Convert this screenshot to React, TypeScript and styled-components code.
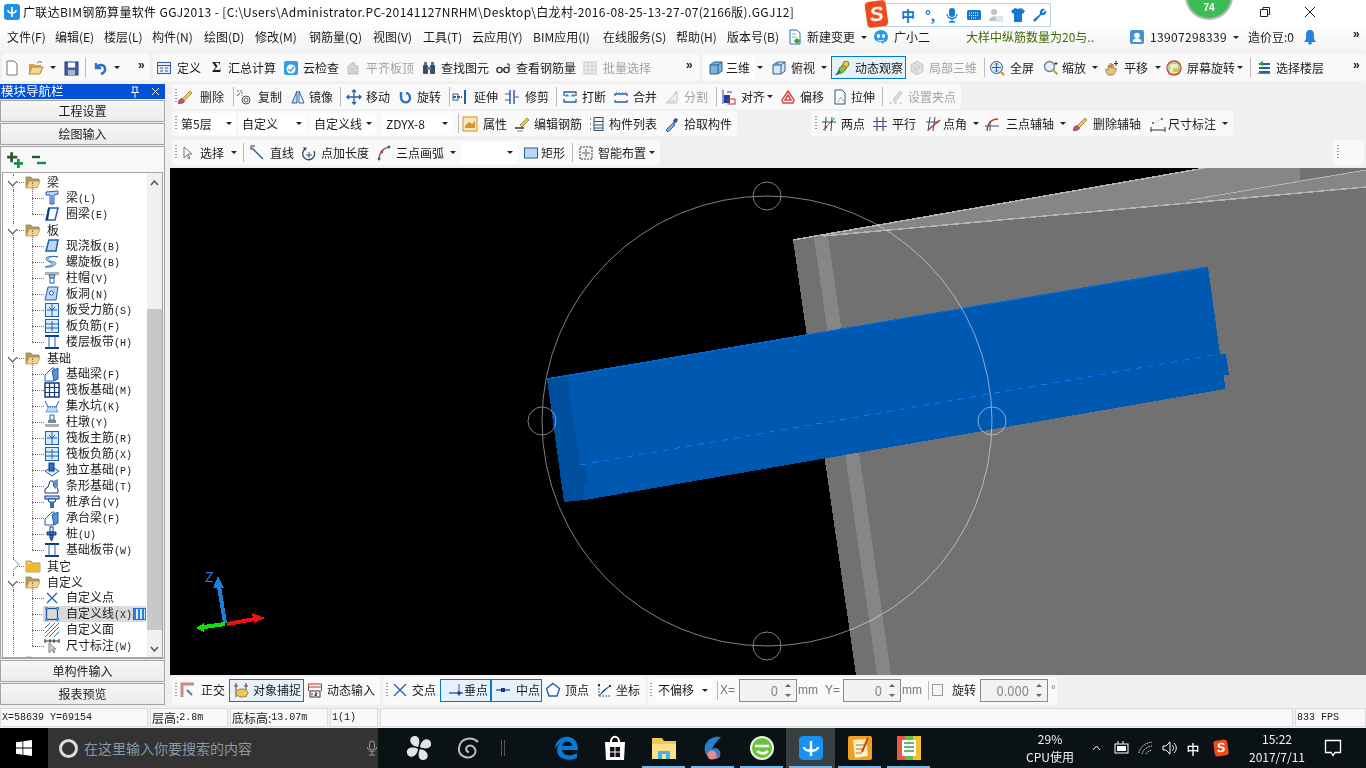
import React from 'react';
import styled, { createGlobalStyle } from 'styled-components';

const Global = createGlobalStyle`
  html, body { margin: 0; padding: 0; background: #f0f0f0; overflow: hidden; }
  * { box-sizing: border-box; }
  body { font-family: "Noto Sans CJK SC", "Liberation Sans", sans-serif; font-size: 12px; color: #1a1a1a; line-height: 1; }
`;

/* ---------- icons ---------- */
const B = '#1c5fb8', L = '#bcd6f5';
const icons: Record<string, React.ReactNode> = {
  new: <path d="M3 1h7l3 3v11H3z" fill="#fff" stroke="#777" />,
  open: <><path d="M1 4h5l1 1h6v2H5l-3 7H1z" fill="#d9a443" /><path d="M4 7h11l-3 7H1z" fill="#f5d98a" stroke="#b08a30" /><path d="M9 3l3-2 2 2" fill="none" stroke="#3a7ac0" /></>,
  save: <><rect x="2" y="2" width="13" height="13" fill="#3f5fb0" stroke="#24397a" /><rect x="5" y="2.5" width="7" height="5" fill="#fff" /><rect x="5" y="10" width="7" height="5" fill="#aab4c8" /></>,
  undo: <path d="M4 3v5h5M4 8c2-4 8-4 9 0 .6 3-1 5-4 6" fill="none" stroke="#2a72c8" strokeWidth="2.4" />,
  define: <><rect x="1.5" y="2.5" width="13" height="11" fill="#e4eef9" stroke="#2c5f9e" /><path d="M1.5 5.5h13M4 8h3M4 11h3M9 8h3M9 11h3" stroke="#2c5f9e" /></>,
  cloud: <><rect x="1" y="1" width="14" height="14" rx="2" fill="#2f9fe8" /><circle cx="8" cy="9" r="4.5" fill="#fff" /><path d="M5.5 9l2 2 3.5-4" stroke="#2f9fe8" strokeWidth="1.4" fill="none" /></>,
  align: <><path d="M3 14V6l6-4v3l4 1v8z" fill="#d8d8d8" stroke="#bdbdbd" /><path d="M5 9h6M5 12h6" stroke="#bbb" /></>,
  binoc: <><rect x="2" y="5" width="5" height="9" rx="1" fill="#33506e" /><rect x="9" y="5" width="5" height="9" rx="1" fill="#33506e" /><rect x="6" y="7" width="4" height="3" fill="#6a819b" /><rect x="3" y="2" width="3" height="3" fill="#5a7592" /><rect x="10" y="2" width="3" height="3" fill="#5a7592" /></>,
  glasses: <><circle cx="4.5" cy="10" r="2.6" fill="none" stroke="#333" strokeWidth="1.4" /><circle cx="11.5" cy="10" r="2.6" fill="none" stroke="#333" strokeWidth="1.4" /><path d="M7 9.5h2M14 9V4h-2" stroke="#333" fill="none" /></>,
  batch: <><rect x="2" y="2" width="12" height="12" fill="#eee" stroke="#c8c8c8" /><path d="M2 6h12M2 10h12M6 2v12M10 2v12" stroke="#cfcfcf" /></>,
  cube: <><path d="M2 5l4-3h8v9l-4 3H2z" fill="#7fb4de" stroke="#2d5f8f" /><path d="M2 5h8v9M10 5l4-3" fill="none" stroke="#2d5f8f" /></>,
  cubeTop: <><path d="M2 5l4-3h8v9l-4 3H2z" fill="#d6e7f5" stroke="#2d5f8f" /><path d="M2 5h8v9M10 5l4-3" fill="none" stroke="#2d5f8f" /><path d="M6 2l4 3H2z" fill="#5a93c5" /></>,
  orbit: <><path d="M3 14c0-6 4-10 10-11-1 6-4 10-10 11z" fill="#86c440" stroke="#3c7a1d" /><circle cx="11" cy="4" r="3" fill="#e8c84a" stroke="#9a7a1d" /><path d="M1 15l4-4" stroke="#2050a0" strokeWidth="1.4" /></>,
  local3d: <><path d="M8 1l6 4v6l-6 4-6-4V5z" fill="#e2e2e2" stroke="#c4c4c4" /><path d="M2 5l6 4 6-4M8 9v6M5 3l6 4M5 13V7" stroke="#c8c8c8" fill="none" /></>,
  full: <><circle cx="7.5" cy="7.5" r="6" fill="#dbe8f6" stroke="#2d5f9e" /><path d="M7.5 3v9M3 7.5h9M6 4.5l1.5-1.5L9 4.5M6 10.5L7.5 12 9 10.5" stroke="#2d5f9e" fill="none" /><path d="M12 12l3 3" stroke="#d68a20" strokeWidth="2" /></>,
  zoom: <><circle cx="6.5" cy="6.5" r="5" fill="#e8eef6" stroke="#6a7f99" strokeWidth="1.3" /><path d="M10.5 10.5l4 4" stroke="#c8a23a" strokeWidth="2.2" /><path d="M13 2v3M11.5 3.5h3" stroke="#333" /></>,
  pan: <><path d="M4 15c-2-3-3-5-2-6l2 1V6l1-1 1 3V4l1-1 1 5V5l1-1 1 5 2-1c1 2-1 5-3 7z" fill="#e6c37a" stroke="#8a6a30" strokeWidth=".7" /><path d="M12 1v5M10 3.5h4" stroke="#333" /></>,
  rotate: <><rect x="3" y="3" width="10" height="11" fill="#dff0c8" stroke="#7aa45a" /><path d="M8 1c4 0 7 3 7 7s-3 7-7 7-7-3-7-7 3-7 7-7z" fill="none" stroke="#d84a30" strokeWidth="1.4" /><rect x="7" y="8" width="5" height="4" fill="#f0c040" /></>,
  floors: <><path d="M3 4h11M3 8h11M3 12h11" stroke="#2c5f9e" strokeWidth="2" /><path d="M7 1L2 4l5 2" fill="#38a048" /><path d="M5 12l-3 1.5h12" stroke="#38a048" fill="none" /></>,
  brush: <><path d="M5 10l8-8 2 2-8 8z" fill="#e8c860" stroke="#8a6a20" strokeWidth=".7" /><path d="M1 15c0-4 1-5 4-6l3 3c-1 3-4 3-7 3z" fill="#c04a60" /><path d="M3 13c1-1 2-1 3-1" stroke="#6a9ad8" /></>,
  copy: <><circle cx="11" cy="11" r="4" fill="none" stroke="#555" /><circle cx="11" cy="11" r="2" fill="none" stroke="#555" /><path d="M2 2h5v5" fill="none" stroke="#2a72c8" strokeDasharray="2 1" /><path d="M2 7l3-3" stroke="#555" /></>,
  mirror: <><path d="M7 2v12H2z" fill="#c8dcf0" stroke="#2d5f9e" /><path d="M9 2v12h5z" fill="#fff" stroke="#2d5f9e" /></>,
  move: <path d="M8 1v14M1 8h14M6 3l2-2 2 2M6 13l2 2 2-2M3 6L1 8l2 2M13 6l2 2-2 2" fill="none" stroke="#2d5f9e" strokeWidth="1.3" />,
  rot: <path d="M4 3v5c0 7 9 7 9 1 0-3-2-5-4-5" fill="none" stroke="#2a72c8" strokeWidth="2.4" />,
  extend: <><rect x="12" y="1" width="2" height="14" fill="#2d5f9e" /><path d="M1 8h9" stroke="#2d5f9e" strokeWidth="2" strokeDasharray="3 1" /><rect x="1" y="5" width="5" height="6" fill="none" stroke="#2d5f9e" /></>,
  trim: <><path d="M6 1v14M10 1v14" stroke="#2d5f9e" strokeWidth="1.5" /><path d="M1 5h5M1 11h5M11 8h4" stroke="#555" /></>,
  break: <><path d="M2 7V3h12v4M2 10v3h12v-3" fill="none" stroke="#2d5f9e" strokeWidth="1.3" /><path d="M5 5l-2 2h4M11 5l2 2H9" fill="#38a0c0" stroke="#38a0c0" /></>,
  merge: <><path d="M2 7V5h12v2M2 11v2h12v-2" fill="none" stroke="#2d5f9e" strokeWidth="1.3" /><path d="M3 3l2 2 2-2M9 3l2 2 2-2" fill="none" stroke="#38a0c0" /></>,
  split: <path d="M2 14L13 3v11zM5 12h6M10 5l3-3" fill="#efefef" stroke="#c4c4c4" />,
  align2: <><rect x="3" y="6" width="6" height="8" fill="#2040a0" /><rect x="7" y="10" width="7" height="5" fill="none" stroke="#c03030" /><path d="M2 1v14M6 3h5" stroke="#2040a0" /></>,
  offset: <path d="M8 2l6 9-1 3H3l-1-3zM8 6l3 5H5z" fill="#fff" stroke="#d04a40" strokeWidth="1.5" />,
  stretch: <><path d="M3 1h7l3 3v11H3z" fill="#fff" stroke="#33506e" /><path d="M6 13l3-5 3 5" fill="none" stroke="#33506e" strokeDasharray="1 1" /></>,
  doc: <><path d="M3 1h7l3 3v11H3z" fill="#fff" stroke="#2d6fc0" /><path d="M5 5h4M5 8h5" stroke="#7ab0e0" /><path d="M10 9l3.500 3-3.500 3-3.500-3z" fill="#4aa02a" /></>,
  mascot: <><path d="M8 1c4 0 7 3 7 7 0 3-2 5-4 5l-1 2-2-2c-4 0-7-2-7-5 0-4 3-7 7-7z" fill="#2a9ae8" /><ellipse cx="5.500" cy="7" rx="1.600" ry="2" fill="#fff" /><ellipse cx="10.500" cy="7" rx="1.600" ry="2" fill="#fff" /><path d="M5 11c2 1 4 1 6 0" stroke="#fff" fill="none" /></>,
  user: <><rect x="1" y="1" width="14" height="14" rx="2" fill="#4a90d0" /><circle cx="8" cy="6.500" r="2.800" fill="#fff" /><path d="M3.500 13c0-5 9-5 9 0z" fill="#fff" /></>,
  bell: <><path d="M8 1c3 0 4 2 4 5v4l2 3H2l2-3V6c0-3 1-5 4-5z" fill="#2a80e0" /><circle cx="8" cy="14" r="1.800" fill="#2a80e0" /></>,
  gripPt: <><path d="M5 11L12 2l2 2-7 9z" fill="#ddd" stroke="#c4c4c4" /><path d="M1 14h3M6 14h3M11 14h3" stroke="#bbb" /></>,
  prop: <><rect x="1" y="1" width="14" height="14" fill="#fbe6b8" stroke="#d89030" /><path d="M3 10l4-4 3 2 3-3v7H3z" fill="#d89030" /></>,
  edit: <><path d="M6 9l7-7 2 2-7 7z" fill="#e8c860" stroke="#8a6a20" strokeWidth=".7" /><path d="M1 12h9" stroke="#333" strokeWidth="1.5" /><path d="M3 15h6" stroke="#888" /></>,
  list: <><path d="M1 3h2M1 8h2M1 13h2" stroke="#333" strokeDasharray="1 1" /><rect x="5" y="1.5" width="9" height="13" fill="#f5f8fc" stroke="#33506e" /><path d="M5 5.5h9M5 9h9M5 12h9" stroke="#33506e" /></>,
  pick: <><path d="M2 14l7-7 2 2-7 7z" fill="#7ab4e4" stroke="#2d5f9e" /><path d="M9 5l2-3 3 1-1 3-3 2z" fill="#2d5f9e" /></>,
  two: <><path d="M2 14L14 2" stroke="#3a8a30" /><path d="M1 6h14M5 1l-1 14M11 1l-1 14" stroke="#33506e" /><circle cx="5" cy="11" r="1.3" fill="#c03030" /></>,
  par: <path d="M1 5.5h14M1 10.5h14M5 1v14M11 1v14" stroke="#4a4a90" strokeWidth="1.2" />,
  ang: <><path d="M1 6h13M5 1L3 15M10 1L8 15" stroke="#33506e" /><path d="M3 14L15 4" stroke="#c03030" strokeWidth="1.5" /></>,
  arc3: <><path d="M3 15C3 8 7 3 14 3" fill="none" stroke="#c03030" strokeWidth="1.3" /><path d="M1 10h14M6 5v10" stroke="#33506e" /></>,
  dim: <><path d="M1 14h14M1 11v5M15 11v5" stroke="#333" /><rect x="2" y="6" width="2" height="2" fill="#4aa03a" /><rect x="11" y="2" width="2" height="2" fill="#4aa03a" /><path d="M5 7l6-4" stroke="#aaa" strokeDasharray="1 1" /></>,
  cursor: <path d="M5 2v11l3-3 2 4 1-1-2-4h4z" fill="#fff" stroke="#777" />,
  line: <><path d="M2 3l11 11" stroke="#2d5f9e" strokeWidth="1.5" /><path d="M1 1v4M1 1h4" stroke="#333" /></>,
  ptlen: <><path d="M4 4a6 6 0 1 0 9 2" fill="none" stroke="#33506e" strokeWidth="1.4" /><path d="M8 7v6M5 10h6" stroke="#33506e" /><path d="M2 2l4 1-2 3z" fill="#33506e" /></>,
  arc: <><path d="M3 14C3 8 7 3 13 2" fill="none" stroke="#c05a30" strokeWidth="1.6" /><circle cx="3" cy="14" r="1.4" fill="#2d5f9e" /><circle cx="13" cy="2" r="1.4" fill="#2d5f9e" /><circle cx="6" cy="7" r="1.2" fill="#2d5f9e" /></>,
  rect: <rect x="1.5" y="3" width="13" height="10" fill="#bcd6f5" stroke="#2d5f9e" />,
  smart: <><rect x="2" y="2" width="12" height="12" fill="#f6f6f6" stroke="#333" strokeDasharray="2 1" /><path d="M8 4v8M4 8h8" stroke="#2d5f9e" /><circle cx="8" cy="8" r="1.5" fill="#d8a020" /></>,
  ortho: <><path d="M3 15V2h12" fill="none" stroke="#c88a8a" strokeWidth="3" /><path d="M8 8l5 5" stroke="#5a7a9a" strokeWidth="2" /></>,
  snap: <><path d="M3 1v14M13 1v14" stroke="#8a3020" /><path d="M1 4h4M11 4h4" stroke="#8a3020" /><ellipse cx="9" cy="11" rx="6" ry="4" fill="#e8c860" stroke="#a08030" /></>,
  dyn: <><path d="M1.5 2h13M1.5 2v7M14.5 2v7M1.5 5h13" stroke="#a04030" fill="none" /><rect x="3" y="9" width="10" height="6" fill="#fff" stroke="#333" /><path d="M5 11v2.5M8 11h2v1H8v1.5h2" stroke="#333" fill="none" /></>,
  cross: <path d="M2 2l12 12M14 2L2 14" stroke="#2a5fa8" strokeWidth="1.4" />,
  perp: <><path d="M1 11h14" stroke="#2a5fa8" strokeWidth="1.4" /><path d="M11 2v12" stroke="#2a5fa8" /><rect x="9.5" y="9.5" width="3" height="3" fill="#1a3a80" /></>,
  mid: <><path d="M1 8h14" stroke="#2a5fa8" strokeWidth="1.4" /><rect x="6" y="6" width="4" height="4" fill="#1a3a80" /></>,
  vert: <path d="M8 1.5l6.5 5-2.5 7.5H4L1.5 6.5z" fill="#fff" stroke="#2a5fa8" strokeWidth="1.4" />,
  coord: <><path d="M3 14h11M3 14V3" stroke="#2a5fa8" strokeDasharray="2 1" /><path d="M3 14l5-6 6-4" stroke="#2a5fa8" /><rect x="2" y="2" width="2" height="2" fill="#333" /><rect x="13" y="3" width="2" height="2" fill="#333" /></>,
  plus: <><path d="M5 1v9M1 5.5h9" stroke="#2a5a2a" strokeWidth="2.4" /><path d="M11 7v8M7 11h8" stroke="#1a8a50" strokeWidth="2.4" /></>,
  minus: <><path d="M1 5h8" stroke="#2a5a2a" strokeWidth="2.4" /><path d="M6 11h9" stroke="#1a8a50" strokeWidth="2.4" /></>,
  fOpen: <><path d="M1 3h5l1 2h7v3H4l-3 6z" fill="#b89a60" stroke="#7a6a40" strokeWidth=".6" /><path d="M4 7h11l-3 7H1z" fill="#f2d488" stroke="#a08a50" strokeWidth=".7" /></>,
  fClosed: <><path d="M1 3h5l1 2h8v9H1z" fill="#f5d060" stroke="#8a7030" strokeWidth=".7" /><path d="M1 6h14v8H1z" fill="#f0b830" /></>,
  beam: <><path d="M2 2l12-1v3l-4 1v9H6V5H2z" fill={L} stroke={B} /><path d="M8 5v9" stroke={B} /></>,
  ring: <><path d="M5 2h9l-3 12H2z" fill="#fff" stroke={B} strokeWidth="1.5" /><path d="M3 14l2-12" stroke="#103a80" strokeWidth="2" /></>,
  slab: <path d="M5 2h9l-2 11H2z" fill={L} stroke={B} strokeWidth="1.5" />,
  spiral: <path d="M14 3C6 1 1 5 6 7c5 1 9 2 3 5-3 2-6 1-8 1 4-2 8-1 7-4C4 8-1 4 4 3c3-1 7-1 10 0z" fill={L} stroke={B} strokeWidth=".8" />,
  cap: <><rect x="1" y="2" width="14" height="3" fill="#b0b0b0" /><path d="M5 5h6l-1 3H6z" fill={L} stroke={B} /><rect x="6" y="8" width="4" height="5" fill="#fff" stroke={B} /></>,
  hole: <><path d="M4 1h10l-2 13H1z" fill={L} stroke={B} /><circle cx="7.5" cy="7" r="2" fill="#fff" stroke={B} /></>,
  gridA: <><rect x="1.5" y="1.5" width="13" height="13" fill="#dcebfb" stroke={B} /><path d="M8 2v12M3 8h10M5 5l3 3 3-3" stroke={B} fill="none" /></>,
  gridB: <><rect x="1.5" y="1.5" width="13" height="13" fill="#dcebfb" stroke={B} /><path d="M2 6h12M2 10h12M8 3v10" stroke={B} /></>,
  band: <><path d="M1 2h14M1 14h14" stroke="#103a80" strokeWidth="2" /><path d="M5 2v12M11 2v12" stroke={B} /></>,
  fbeam: <><path d="M1 15V9l7-7h2v13z" fill="#fff" stroke={B} /><path d="M8 5l6-3v11l-4 2z" fill="#5a93d0" stroke={B} /></>,
  raft: <><rect x="1" y="1" width="14" height="14" fill="#fff" stroke="#103a80" strokeWidth="1.5" /><path d="M1 5.5h14M1 10.5h14M5.5 1v14M10.5 1v14" stroke="#103a80" strokeWidth="1.2" /></>,
  pit: <><path d="M1 3l3 6h8l3-6" fill="none" stroke={B} /><path d="M4 9h8l2 5H2z" fill={L} strokeDasharray="1 1" stroke={B} /></>,
  pier: <><path d="M6 1h4v5H6z" fill="#fff" stroke={B} /><path d="M4 6h8v3H4z" fill="#789" /><rect x="1" y="10" width="14" height="3" fill="#b0b0b0" /></>,
  indep: <><path d="M1 9l7-4 7 4-7 5z" fill="#dcebfb" stroke={B} /><rect x="5" y="1" width="5" height="8" fill="#2d6fc0" stroke="#103a80" /></>,
  strip: <><path d="M1 15v-4l3-2 2-6h3l1 6h2l2 2v4z" fill="#fff" stroke="#103a80" /><path d="M9 3l5-2v8l-3 2z" fill="#5a93d0" /></>,
  pile: <><rect x="1" y="2" width="14" height="3" fill={L} stroke="#103a80" /><path d="M4 5h8l-1 3H5z" fill="#fff" stroke="#103a80" /><rect x="6" y="8" width="4" height="6" fill="#2d6fc0" /></>,
  pileU: <><rect x="6" y="1" width="3" height="5" fill="#fff" stroke="#103a80" /><path d="M3 6h9v3H3zM6 9h3v3l-1.500 3-1.500-3z" fill="#2d6fc0" stroke="#103a80" /></>,
  xPt: <path d="M3 3l10 10M13 3L3 13" stroke="#2a5fa8" strokeWidth="1.3" />,
  xLine: <><rect x="2.500" y="2.500" width="11" height="11" fill="none" stroke="#1c4f98" strokeWidth="1.2" /><path d="M1 1h3v3H1zM12 1h3v3h-3zM1 12h3v3H1zM12 12h3v3h-3z" fill="#4a8fe0" /></>,
  xFace: <path d="M1 6l5-5M1 11L11 1M1 15L15 1M5 15L15 5M10 15l5-5" stroke="#2a6fc8" />,
  xDim: <><path d="M1 3h14M1 1v4M15 1v4M6 1v4M10 1v4" stroke="#222" /><path d="M5 5v10l3-3 2 3 1-1-2-3h3z" fill="#ccc" stroke="#888" /></>,
};

const Svg = styled.svg<{ $s: number }>`
  width: ${p => p.$s}px;
  height: ${p => p.$s}px;
  flex: none;
  display: block;
`;
const Icon = ({ n, s = 16 }: { n: string; s?: number }) => (
  <Svg $s={s} viewBox="0 0 16 16">{icons[n]}</Svg>
);

/* ---------- toolbar machinery ---------- */
type It = { left: number; node: React.ReactNode };

const Slot = styled.div<{ $w: number }>`
  width: ${p => p.$w}px;
  flex: none;
  height: 100%;
  display: flex;
  align-items: center;
`;
const ToolBox = styled.div<{ $pad: number; $w?: number; $on?: boolean; $white?: boolean }>`
  display: flex;
  align-items: center;
  padding-left: ${p => p.$pad}px;
  ${p => (p.$w ? `width: ${p.$w}px;` : '')}
  ${p => (p.$on ? 'height: 23px; border: 1px solid #0078d7; background: #e5f1fb;' : '')}
  ${p => (p.$white ? 'height: 24px; background: #fff;' : '')}
`;
const Label = styled.span<{ $off?: boolean; $gap?: number }>`
  white-space: nowrap;
  font-size: 12px;
  margin-left: ${p => p.$gap ?? 0}px;
  color: ${p => (p.$off ? '#a3a3a3' : '#1a1a1a')};
`;
const Phone = styled.span`
  white-space: nowrap;
  font-size: 12px;
  letter-spacing: 0.35px;
`;
const Sigma = styled.span`
  font: bold 14px "Liberation Serif", serif;
`;
const Separator = styled.div`
  width: 1px;
  height: 19px;
  background: #b9b9b9;
`;
const Grip = styled.div`
  width: 2px;
  height: 15px;
  background-image: linear-gradient(#9a9a9a 50%, transparent 50%);
  background-size: 2px 3px;
`;
const Caret = styled.div`
  width: 0;
  height: 0;
  margin-left: 2px;
  border-left: 3px solid transparent;
  border-right: 3px solid transparent;
  border-top: 3px solid #222;
`;
const More = styled.span`
  font-family: "Liberation Sans", sans-serif;
  font-size: 12px;
  font-weight: bold;
  margin-top: -6px;
`;
const Combo = styled.div<{ $w: number }>`
  width: ${p => p.$w}px;
  height: 22px;
  background: #fff;
  display: flex;
  align-items: center;
  justify-content: space-between;
  padding: 0 4px 0 3px;
`;

type TOpt = { t?: number; off?: boolean; box?: [number, number]; white?: [number, number] };
const T = (c: number, icon: string, label: string, o: TOpt = {}): It => {
  const span = o.box ?? o.white;
  const left = span ? span[0] : c - 8;
  const gap = (o.t ?? c + 12) - (c + 8);
  return {
    left,
    node: (
      <ToolBox $pad={c - 8 - left} $w={span ? span[1] - span[0] : undefined} $on={!!o.box} $white={!!o.white}>
        <Icon n={icon} />
        <Label $gap={gap} $off={o.off}>{label}</Label>
      </ToolBox>
    ),
  };
};
const I = (c: number, icon: string): It => ({ left: c - 8, node: <Icon n={icon} /> });
const S = (x: number): It => ({ left: x, node: <Separator /> });
const Gr = (x: number): It => ({ left: x, node: <Grip /> });
const C = (x: number): It => ({ left: x - 5, node: <Caret /> });
const N = (x: number, node: React.ReactNode): It => ({ left: x, node });
const X = (x: number): It => ({ left: x - 5, node: <More>»</More> });
const Cb = (x: number, w: number, text: string): It => ({
  left: x,
  node: <Combo $w={w}><Label>{text}</Label><Caret /></Combo>,
});

const BandBox = styled.div<{ $w: number; $ml: number; $plain?: boolean; $pb?: number }>`
  width: ${p => p.$w}px;
  margin-left: ${p => p.$ml}px;
  flex: none;
  height: 100%;
  display: flex;
  border-radius: 3px;
  padding-bottom: ${p => p.$pb ?? 0}px;
  background: ${p => (p.$plain ? 'transparent' : '#f9f9f9')};
`;
type BandDef = { from: number; to: number; items: It[]; plain?: boolean; pb?: number };
const Bands = ({ base, bands }: { base: number; bands: BandDef[] }) => {
  let prev = base;
  return (
    <>
      {bands.map((b, bi) => {
        const ml = b.from - prev;
        prev = b.to;
        return (
          <BandBox key={bi} $w={b.to - b.from} $ml={ml} $plain={b.plain} $pb={b.pb}>
            <Slot $w={b.items[0].left - b.from} />
            {b.items.map((it, i) => {
              const next = i + 1 < b.items.length ? b.items[i + 1].left : b.to;
              return <Slot key={i} $w={next - it.left}>{it.node}</Slot>;
            })}
          </BandBox>
        );
      })}
    </>
  );
};

/* ---------- frame ---------- */
const Page = styled.div`
  width: 1366px;
  height: 768px;
  display: flex;
  flex-direction: column;
  overflow: hidden;
  background: #f0f0f0;
`;
const TitleBar = styled.div`
  height: 23px;
  flex: none;
  background: #fff;
  display: flex;
  align-items: center;
  position: relative;
  padding-left: 4px;
`;
const AppLogo = styled.div`
  width: 16px;
  height: 16px;
  border-radius: 3px;
  background: #1e90e8;
  display: flex;
  align-items: center;
  justify-content: center;
  margin-right: 3px;
`;
const TitleText = styled.span`
  font-size: 12px;
  letter-spacing: 0.36px;
  white-space: nowrap;
  color: #111;
`;
const WinControls = styled.div`
  position: absolute;
  right: 3px;
  top: 0;
  height: 23px;
  display: flex;
  align-items: center;
  gap: 29px;
`;
const WinBtn = styled.svg`
  width: 16px;
  height: 16px;
  display: block;
`;
const WinWrap = styled.div`
  width: 16px;
`;
const Ime = styled.div`
  position: absolute;
  left: 875px;
  top: 3px;
  width: 176px;
  height: 24px;
  background: #fff;
  border: 1px solid #bcd3e6;
  display: flex;
  align-items: center;
  padding-left: 24px;
  gap: 6px;
  z-index: 3;
`;
const ImeLogo = styled.div`
  position: absolute;
  left: 866px;
  top: 1px;
  width: 21px;
  height: 26px;
  background: #ee4a1a;
  border-radius: 4px;
  transform: rotate(-8deg);
  color: #fff;
  font: italic bold 21px "Liberation Sans", sans-serif;
  text-align: center;
  line-height: 26px;
  z-index: 4;
`;
const ImeChar = styled.span`
  color: #1478d0;
  font-weight: 700;
  font-size: 14px;
  width: 16px;
  text-align: center;
`;
const Ball = styled.div`
  position: absolute;
  left: 1185px;
  top: -28px;
  width: 48px;
  height: 48px;
  border-radius: 50%;
  background: #3fbb55;
  border: 2px solid #b9b9b9;
  display: flex;
  align-items: flex-end;
  justify-content: center;
  padding-bottom: 5px;
  color: #fff;
  font: bold 10px "Liberation Sans", sans-serif;
  z-index: 2;
`;

const MenuBar = styled.div`
  height: 31px;
  flex: none;
  display: flex;
  padding-bottom: 3px;
  background: linear-gradient(#ffffff, #f2f2f2);
`;
const TipText = styled.span`
  color: #3f6a00;
  font-size: 12px;
  white-space: nowrap;
`;
const Row = styled.div<{ $h: number; $mt?: number }>`
  height: ${p => p.$h}px;
  margin-top: ${p => p.$mt ?? 0}px;
  flex: none;
  display: flex;
`;
const Body = styled.div`
  flex: none;
  height: 624px;
  display: flex;
`;

/* ---------- nav panel ---------- */
const Nav = styled.div`
  width: 165px;
  flex: none;
  display: flex;
  flex-direction: column;
`;
const NavHead = styled.div`
  height: 15px;
  margin-bottom: 1px;
  flex: none;
  background: #0550d8;
  color: #fff;
  font-size: 12.5px;
  display: flex;
  align-items: center;
  padding: 0 1px;
`;
const NavHeadText = styled.span`
  flex: 1;
`;
const NavPin = styled.svg`
  width: 10px;
  height: 12px;
  display: block;
  margin-right: 11px;
`;
const NavClose = styled.svg`
  width: 9px;
  height: 9px;
  display: block;
  margin-right: 4px;
`;
const NavTab = styled.div`
  height: 22px;
  flex: none;
  margin-bottom: 1px;
  border: 1px solid #a4a4a4;
  background: linear-gradient(#f6f6f6, #ececec);
  display: flex;
  align-items: center;
  justify-content: center;
  font-size: 12px;
`;
const TreeShell = styled.div`
  height: 513px;
  flex: none;
  margin-bottom: 1px;
  border: 1px solid #a4a4a4;
  background: #f4f4f4;
  display: flex;
  flex-direction: column;
  padding: 0 1px;
`;
const ExpandBar = styled.div`
  height: 25px;
  flex: none;
  display: flex;
  align-items: center;
  gap: 7px;
  padding-left: 4px;
  background: #f8f8f8;
`;
const TreeFrame = styled.div`
  height: 486px;
  flex: none;
  border: 1px solid #a4a4a4;
  background: #fff;
  display: flex;
  overflow: hidden;
`;
const TreeList = styled.div`
  width: 143px;
  flex: none;
  padding-top: 1px;
  overflow: hidden;
`;
const TreeRow = styled.div<{ $child?: boolean; $line?: boolean }>`
  position: relative;
  height: 16px;
  display: flex;
  align-items: center;
  padding-left: ${p => (p.$child ? '41px' : '22px')};
  white-space: nowrap;
  &::before {
    content: '';
    position: absolute;
    left: ${p => (p.$child ? '29px' : '11px')};
    top: 8px;
    width: ${p => (p.$child ? '12px' : '10px')};
    border-top: 1px dotted #777;
  }
  &::after {
    content: '';
    position: absolute;
    left: 29px;
    top: -8px;
    height: 16px;
    border-left: ${p => (p.$line ? '1px dotted #777' : 'none')};
  }
`;
const RootRail = styled.div`
  position: absolute;
  left: 10px;
  top: 0;
  height: 16px;
  border-left: 1px dotted #777;
`;
const Arrow = styled.div<{ $open?: boolean }>`
  position: absolute;
  left: ${p => (p.$open ? '6px' : '8px')};
  top: ${p => (p.$open ? '4px' : '3px')};
  width: 7px;
  height: 7px;
  background: #fff;
  border-right: 1.5px solid ${p => (p.$open ? '#444' : '#aaa')};
  border-bottom: 1.5px solid ${p => (p.$open ? '#444' : '#aaa')};
  transform: rotate(${p => (p.$open ? '45deg' : '-45deg')});
  z-index: 1;
`;
const TreeLabel = styled.span`
  margin-left: 6px;
  font-size: 12px;
  padding-right: 1px;
`;
const Key = styled.span`
  font-family: "Liberation Mono", monospace;
  font-size: 10px;
`;
const Chip = styled.span<{ $c: string }>`
  position: absolute;
  left: ${p => (p.$c === 'b' ? '94px' : '109px')};
  top: 3px;
  width: ${p => (p.$c === 'b' ? '14px' : '20px')};
  height: 13px;
  background: ${p => (p.$c === 'b' ? '#bcd6f5' : '#ffe14a')};
  border: 1px solid ${p => (p.$c === 'b' ? '#2a6fc8' : '#c8a820')};
`;
const SelChip = styled.span`
  position: absolute;
  left: 130px;
  top: 2px;
  width: 13px;
  height: 12px;
  background: repeating-linear-gradient(90deg, #2a7fd8 0 2px, #d8eaff 2px 4px);
  border: 1px solid #2a6fc8;
  z-index: 1;
`;
const SelBg = styled.div`
  position: absolute;
  left: 40px;
  right: 0;
  top: 0;
  bottom: 0;
  background: #d9d9d9;
  z-index: 0;
`;
const Above = styled.div`
  position: relative;
  display: flex;
  align-items: center;
  z-index: 1;
`;
const VScroll = styled.div`
  width: 16px;
  flex: none;
  background: #f0f0f0;
  display: flex;
  flex-direction: column;
  align-items: center;
  border-left: 1px solid #fff;
`;
const ScrollTrack = styled.div`
  height: 136px;
  flex: none;
  width: 100%;
  display: flex;
  justify-content: center;
  padding-top: 7px;
  color: #555;
`;
const ScrollTail = styled.div`
  height: 27px;
  flex: none;
  width: 100%;
  display: flex;
  justify-content: center;
  padding-top: 16px;
`;
const ScrollThumb = styled.div`
  height: 321px;
  flex: none;
  width: 100%;
  background: #c8c8c8;
`;
const Chev = styled.svg`
  width: 9px;
  height: 6px;
  display: block;
`;

type Child = [string, string, string, boolean?];
const tree: { name: string; open: boolean; kids: Child[] }[] = [
  { name: '梁', open: true, kids: [['梁', '(L)', 'beam'], ['圈梁', '(E)', 'ring']] },
  { name: '板', open: true, kids: [['现浇板', '(B)', 'slab'], ['螺旋板', '(B)', 'spiral'], ['柱帽', '(V)', 'cap'], ['板洞', '(N)', 'hole'], ['板受力筋', '(S)', 'gridA'], ['板负筋', '(F)', 'gridB'], ['楼层板带', '(H)', 'band']] },
  { name: '基础', open: true, kids: [['基础梁', '(F)', 'fbeam'], ['筏板基础', '(M)', 'raft'], ['集水坑', '(K)', 'pit'], ['柱墩', '(Y)', 'pier'], ['筏板主筋', '(R)', 'gridA'], ['筏板负筋', '(X)', 'gridB'], ['独立基础', '(P)', 'indep'], ['条形基础', '(T)', 'strip'], ['桩承台', '(V)', 'pile'], ['承台梁', '(F)', 'fbeam'], ['桩', '(U)', 'pileU'], ['基础板带', '(W)', 'band']] },
  { name: '其它', open: false, kids: [] },
  { name: '自定义', open: true, kids: [['自定义点', '', 'xPt'], ['自定义线', '(X)', 'xLine', true], ['自定义面', '', 'xFace'], ['尺寸标注', '(W)', 'xDim']] },
];

const Tree = () => (
  <TreeList>
    {tree.map((g, gi) => (
      <React.Fragment key={gi}>
        <TreeRow>
          <RootRail />
          <Arrow $open={g.open} />
          <Icon n={g.open ? 'fOpen' : 'fClosed'} />
          <TreeLabel>{g.name}</TreeLabel>
        </TreeRow>
        {g.kids.map((k, i) => (
          <TreeRow key={i} $child $line>
            <RootRail />
            {k[3] && <SelBg />}
            <Above>
              <Icon n={k[2]} />
              <TreeLabel>{k[0]}<Key>{k[1]}</Key></TreeLabel>
            </Above>
            {k[3] && <SelChip />}
          </TreeRow>
        ))}
      </React.Fragment>
    ))}
    <TreeRow>
      <Icon n="fOpen" />
      <Chip $c="b" />
      <Chip $c="y" />
    </TreeRow>
  </TreeList>
);

/* ---------- work area ---------- */
const Work = styled.div`
  width: 1196px;
  margin-left: 5px;
  flex: none;
  display: flex;
  flex-direction: column;
`;
const CanvasBox = styled.div`
  height: 507px;
  margin-top: 3px;
  flex: none;
  background: #000;
`;
const CanvasSvg = styled.svg`
  width: 1196px;
  height: 507px;
  display: block;
`;
const CanvasAxisText = styled.text`
  font: 14px "Liberation Sans", sans-serif;
  fill: #1a80e0;
`;
const OrbitRings = styled.g`
  fill: none;
  stroke: #808080;
  stroke-width: 1;
  mix-blend-mode: screen;
`;

const Canvas = () => (
  <CanvasBox>
    <CanvasSvg viewBox="170 168 1196 507" shapeRendering="crispEdges">
      <polygon points="793,240 1205,168 1366,168 1366,187 960,223 823,236" fill="#868686" />
      <polygon points="793,240 823,236 960,223 1366,187 1366,675 856,675" fill="#717171" />
      <polygon points="814,238 828,236 891,675 877,675" fill="#868686" />
      <polygon points="1300,168 1366,168 1366,170 1300,180" fill="#717171" />
      <line x1="793" y1="240" x2="1205" y2="168" stroke="#b4b4b4" strokeWidth="1.5" />
      <line x1="823" y1="236" x2="1366" y2="187" stroke="#b4b4b4" strokeWidth="1.5" />
      <line x1="1190" y1="200" x2="1366" y2="170" stroke="#b4b4b4" strokeWidth="1" />
      <polygon points="547,379 1208,267 1220,354 1226,354 1229,375 1224,375 1225,389 585,500 564,502" fill="#0059b0" />
      <polygon points="547,379 567,376 580,465 586,465 588,485 583,485 585,500 564,502" fill="#004f9e" />
      <line x1="547" y1="379" x2="1208" y2="267" stroke="#0068d4" strokeWidth="1.5" />
      <line x1="580" y1="465" x2="1220" y2="354" stroke="#0a78ee" strokeWidth="1" strokeDasharray="6 6" />
      <OrbitRings shapeRendering="geometricPrecision">
        <circle cx="767" cy="421" r="225" />
        <circle cx="767" cy="196" r="14" />
        <circle cx="542" cy="421" r="14" />
        <circle cx="992" cy="421" r="14" />
        <circle cx="767" cy="646" r="14" />
      </OrbitRings>
      <CanvasAxisText x="205" y="582">Z</CanvasAxisText>
      <path d="M225 623L218 580" stroke="#1a80e0" strokeWidth="4" />
      <polygon points="218,576 224,588 213,588" fill="#1a80e0" />
      <path d="M227 624L255 619" stroke="#f01010" strokeWidth="4" />
      <polygon points="265,618 252,613 254,623" fill="#f01010" />
      <path d="M225 624L204 627" stroke="#10e010" strokeWidth="4" />
      <polygon points="196,628 204,623 204,632" fill="#10e010" />
    </CanvasSvg>
  </CanvasBox>
);

const Spin = styled.div<{ $w: number }>`
  width: ${p => p.$w}px;
  height: 23px;
  border: 1px solid #8a8a8a;
  background: #f2f2f2;
  display: flex;
  align-items: center;
  justify-content: flex-end;
  color: #888;
  padding-right: 4px;
  font-size: 13px;
`;
const SpinArrows = styled.div`
  width: 8px;
  margin-left: 6px;
  display: flex;
  flex-direction: column;
  gap: 7px;
  align-items: center;
`;
const Tri = styled.div<{ $up?: boolean }>`
  width: 0;
  height: 0;
  border-left: 3px solid transparent;
  border-right: 3px solid transparent;
  ${p => (p.$up ? 'border-bottom: 3px solid #666;' : 'border-top: 3px solid #666;')}
`;
const Muted = styled.span`
  color: #777;
  font-size: 12px;
  white-space: nowrap;
  font-family: "Liberation Sans", sans-serif;
`;
const CheckBox = styled.div`
  width: 11px;
  height: 12px;
  border: 1px solid #9a9a9a;
  background: #f6f6f6;
`;
const SpinBox = ({ w, v }: { w: number; v: string }) => (
  <Spin $w={w}>{v}<SpinArrows><Tri $up /><Tri /></SpinArrows></Spin>
);

/* ---------- status + taskbar ---------- */
const Status = styled.div`
  height: 20px;
  flex: none;
  display: flex;
  gap: 2px;
  padding-bottom: 1px;
`;
const Cell = styled.div<{ $w: number; $grow?: boolean }>`
  ${p => (p.$grow ? 'flex: 1;' : `width: ${p.$w}px; flex: none;`)}
  border: 1px solid #dcdcdc;
  background: #f8f8f8;
  display: flex;
  align-items: center;
  padding-left: 1px;
  font-size: 12px;
  white-space: nowrap;
`;
const Mono = styled.span`
  font-family: "Liberation Mono", monospace;
  font-size: 10px;
`;
const Taskbar = styled.div`
  height: 40px;
  flex: none;
  background: #0a1216;
  display: flex;
  color: #fff;
`;
const StartBtn = styled.div`
  width: 48px;
  flex: none;
  background: #000;
  display: flex;
  align-items: center;
  justify-content: center;
`;
const Search = styled.div`
  width: 330px;
  flex: none;
  background: #333;
  display: flex;
  align-items: center;
  padding-left: 11px;
`;
const Cortana = styled.div`
  width: 19px;
  height: 19px;
  border: 3px solid #dcdcdc;
  border-radius: 50%;
  flex: none;
`;
const SearchText = styled.span`
  margin-left: 6px;
  font-size: 14px;
  color: #8b98a3;
  flex: 1;
`;
const SearchMic = styled.div`
  width: 14px;
`;
const AppSlot = styled.div<{ $run?: boolean; $active?: boolean }>`
  width: 49px;
  flex: none;
  display: flex;
  align-items: center;
  justify-content: center;
  position: relative;
  background: ${p => (p.$active ? '#3a3f42' : 'transparent')};
  ${p => (p.$run ? `&::after { content: ''; position: absolute; left: 3px; right: 3px; bottom: 0; height: 2px; background: #76b9ed; }` : '')}
`;
const TaskGap = styled.div`
  width: 49px;
  flex: none;
  display: flex;
  align-items: center;
  padding-left: 9px;
  gap: 2px;
`;
const TaskSep = styled.div`
  width: 1px;
  height: 16px;
  background: #555;
`;
const AppsStart = styled.div`
  width: 16px;
  flex: none;
`;
const Tray = styled.div`
  margin-left: auto;
  display: flex;
  align-items: center;
  padding-right: 17px;
`;
const Stack = styled.div<{ $w: number }>`
  width: ${p => p.$w}px;
  flex: none;
  height: 40px;
  display: flex;
  flex-direction: column;
  align-items: center;
  justify-content: space-between;
  padding: 3px 0 3px;
  font-size: 12px;
  line-height: 16px;
  color: #f4f4f4;
  white-space: nowrap;
`;
const TraySlot = styled.div<{ $w: number }>`
  width: ${p => p.$w}px;
  flex: none;
  display: flex;
  justify-content: center;
  align-items: center;
  font-size: 13px;
  font-weight: 500;
`;
const TaskSvg = styled.svg<{ $s?: number }>`
  width: ${p => p.$s ?? 32}px;
  height: ${p => p.$s ?? 32}px;
  display: block;
`;
const TaskLogoS = styled.div`
  width: 14px;
  height: 16px;
  background: #ee4a1a;
  border-radius: 3px;
  transform: rotate(-8deg);
  font: italic bold 13px "Liberation Sans", sans-serif;
  color: #fff;
  text-align: center;
  line-height: 16px;
`;
const LogoGlyph = styled.svg`
  width: 12px;
  height: 12px;
  display: block;
`;

const taskIcons: { k: string; run?: boolean; active?: boolean; node: React.ReactNode }[] = [
  { k: 'fan', node: <path d="M15 15C6 14 5 5 11 4c5-1 7 5 4 11zM17 15c1-9 10-10 11-4 1 5-5 7-11 4zM17 17c9 1 10 10 4 11-5 1-7-5-4-11zM15 17c-1 9-10 10-11 4-1-5 5-7 11-4z" fill="#e4e4e4" /> },
  { k: 'swirl', node: <path d="M26 10C20 4 8 6 7 16c-1 9 10 12 15 7 4-5-1-11-6-9-3 2-2 6 1 6" fill="none" stroke="#bdbdbd" strokeWidth="2" /> },
  { k: 'gap', node: null },
  { k: 'edge', node: <path d="M5 17C5 8 13 4 19 5c6 1 9 6 9 13H12c1 6 9 7 15 3v5c-9 4-20 1-20-8 0-3 2-7 5-9-3 2-5 5-7 8zM12 14h10c0-6-9-6-10 0z" fill="#0a78d7" /> },
  { k: 'store', node: <><path d="M6 10h20l-1 18H7z" fill="#fff" /><path d="M12 10c0-7 8-7 8 0" fill="none" stroke="#fff" strokeWidth="2" /><path d="M11 15h4.500v4.500H11zM16.500 15H21v4.500h-4.500zM11 20.500h4.500V25H11zM16.500 20.500H21V25h-4.500z" fill="#111" /></> },
  { k: 'folder', run: true, node: <><path d="M4 6h10l2 3h12v18H4z" fill="#f0c850" /><path d="M4 12h24v15H4z" fill="#fbe28a" /><rect x="10" y="19" width="12" height="8" fill="#4ab0e8" /><rect x="14" y="22" width="4" height="5" fill="#fbe28a" /></> },
  { k: 'browser', run: true, node: <><path d="M24 5C11 3 5 14 9 22c3 6 12 7 14 2 2-6-4-10-8-7 2-5 6-9 9-12z" fill="#2a80c8" /><path d="M9 20c3 7 12 8 14 4-4 1-9-1-14-4z" fill="#e85a60" /><circle cx="15" cy="23" r="4.500" fill="#e88a90" /></> },
  { k: 'green', run: true, node: <><circle cx="16" cy="16" r="11" fill="#6ac440" stroke="#e8f8e0" strokeWidth="2" /><path d="M9 14h14M11 19c4 3 8 3 11 0" stroke="#fff" strokeWidth="2.500" fill="none" /></> },
  { k: 'active', run: true, active: true, node: <><rect x="4" y="4" width="24" height="24" rx="4" fill="#1a90f0" /><path d="M16 9v15M9 15c0 5 14 5 14 0" stroke="#fff" strokeWidth="2.500" fill="none" /></> },
  { k: 'note', run: true, node: <><rect x="4" y="4" width="24" height="24" rx="2" fill="#f0a020" /><path d="M9 8l13-1 2 17-13 2z" fill="#fbeec8" /><path d="M12 13h8M12 17h8M12 21h6" stroke="#a08030" /><path d="M24 6l-6 14" stroke="#c04a20" strokeWidth="2" /></> },
  { k: 'plan', run: true, node: <><rect x="4" y="4" width="8" height="24" fill="#e85a40" /><rect x="12" y="4" width="8" height="24" fill="#60c040" /><rect x="20" y="4" width="8" height="24" fill="#f0c030" /><rect x="9" y="8" width="14" height="16" fill="#fff" /><path d="M11 11h10M11 15h10M11 19h10" stroke="#3a9a50" strokeWidth="1.500" /></> },
];

const WinLogo = ({ s, c }: { s: number; c: string }) => (
  <TaskSvg $s={s} viewBox="0 0 16 16"><path d="M0 2.300l6.500-.9v6.200H0zM7.300 1.300L16 0v7.600H7.300zM0 8.400h6.500v6.300L0 13.800zM7.300 8.400H16V16l-8.700-1.200z" fill={c} /></TaskSvg>
);
const MicGlyph = ({ c }: { c: string }) => (
  <TaskSvg $s={16} viewBox="0 0 16 16"><rect x="5.500" y="1" width="5" height="9" rx="2.500" fill="none" stroke={c} /><path d="M3.500 7c0 6 9 6 9 0M8 12v3M5 15h6" fill="none" stroke={c} /></TaskSvg>
);

/* ---------- data ---------- */
const menu: BandDef[] = [{
  from: 0, to: 1366, plain: true,
  items: [
    N(7, <Label>文件(F)</Label>), N(55, <Label>编辑(E)</Label>), N(104, <Label>楼层(L)</Label>), N(152, <Label>构件(N)</Label>),
    N(204, <Label>绘图(D)</Label>), N(255, <Label>修改(M)</Label>), N(309, <Label>钢筋量(Q)</Label>), N(373, <Label>视图(V)</Label>),
    N(423, <Label>工具(T)</Label>), N(472, <Label>云应用(Y)</Label>), N(533, <Label>BIM应用(I)</Label>), N(603, <Label>在线服务(S)</Label>),
    N(676, <Label>帮助(H)</Label>), N(727, <Label>版本号(B)</Label>),
    T(795, 'doc', '新建变更'), C(864), T(881, 'mascot', '广小二', { t: 894 }),
    N(966, <TipText>大样中纵筋数量为20与..</TipText>),
    I(1137, 'user'), N(1150, <Phone>13907298339</Phone>), C(1236), N(1248, <Label>造价豆:0</Label>),
    I(1310, 'bell'), X(1358),
  ],
}];
const row1: BandDef[] = [
  { from: 2, to: 150, items: [I(12, 'new'), I(36, 'open'), C(53), I(71, 'save'), S(85), I(100, 'undo'), C(117), X(143)] },
  { from: 153, to: 699, items: [
    T(164, 'define', '定义', { t: 177 }), N(212, <Sigma>Σ</Sigma>), N(228, <Label>汇总计算</Label>), T(291, 'cloud', '云检查'),
    T(353, 'align', '平齐板顶', { t: 366, off: true }), T(429, 'binoc', '查找图元'), T(503, 'glasses', '查看钢筋量', { t: 516 }),
    T(590, 'batch', '批量选择', { t: 603, off: true }), X(691),
  ] },
  { from: 702, to: 1366, items: [
    T(716, 'cube', '三维', { t: 726, white: [705, 755] }), C(760), T(779, 'cubeTop', '俯视', { t: 791 }), C(824),
    T(842, 'orbit', '动态观察', { box: [831, 906] }), T(917, 'local3d', '局部三维', { off: true }), S(984),
    T(997, 'full', '全屏', { t: 1010 }), T(1051, 'zoom', '缩放', { t: 1062 }), C(1095), T(1112, 'pan', '平移'), C(1158),
    T(1174, 'rotate', '屏幕旋转', { t: 1187 }), C(1240), S(1250), T(1264, 'floors', '选择楼层'), X(1358),
  ] },
];
const row2: BandDef[] = [{ from: 172, to: 961, items: [
  Gr(175), T(185, 'brush', '删除', { t: 200 }), S(233), T(243, 'copy', '复制', { t: 258 }), T(298, 'mirror', '镜像', { t: 309 }), S(340),
  T(354, 'move', '移动'), T(405, 'rot', '旋转'), S(449), T(460, 'extend', '延伸', { t: 474 }), T(512, 'trim', '修剪', { t: 525 }), S(556),
  T(570, 'break', '打断'), T(621, 'merge', '合并'), T(672, 'split', '分割', { off: true }), S(716),
  T(729, 'align2', '对齐'), C(770), T(788, 'offset', '偏移'), T(840, 'stretch', '拉伸', { t: 851 }), S(882), T(896, 'gripPt', '设置夹点', { off: true }),
] }];
const row3: BandDef[] = [
  { from: 172, to: 737, items: [
    Gr(175), Cb(178, 58, '第5层'), Cb(239, 67, '自定义'), Cb(311, 65, '自定义线'), Cb(383, 69, 'ZDYX-8'), S(458),
    T(470, 'prop', '属性', { t: 483 }), T(522, 'edit', '编辑钢筋'), T(597, 'list', '构件列表'), T(672, 'pick', '拾取构件'),
  ] },
  { from: 811, to: 1233, items: [
    Gr(815), T(829, 'two', '两点'), T(880, 'par', '平行'), T(933, 'ang', '点角', { t: 943 }), C(976), T(992, 'arc3', '三点辅轴', { t: 1006 }), C(1063),
    T(1080, 'brush', '删除辅轴', { t: 1093 }), T(1158, 'dim', '尺寸标注', { t: 1168 }), C(1225),
  ] },
];
const row4: BandDef[] = [
  { from: 172, to: 660, items: [
    Gr(175), T(187, 'cursor', '选择', { t: 200 }), C(234), S(243), T(258, 'line', '直线'), T(309, 'ptlen', '点加长度'), T(384, 'arc', '三点画弧'), C(453),
    Cb(461, 56, ''), T(531, 'rect', '矩形', { t: 541 }), S(572), T(586, 'smart', '智能布置'), C(652),
  ] },
  { from: 1333, to: 1364, items: [Gr(1337)] },
];
const bottom: BandDef[] = [
  { from: 172, to: 380, pb: 2, items: [
    Gr(175), T(187, 'ortho', '正交', { t: 201 }), T(240, 'snap', '对象捕捉', { box: [229, 304] }), T(315, 'dyn', '动态输入'),
  ] },
  { from: 383, to: 645, pb: 2, items: [
    Gr(386), T(400, 'cross', '交点'), T(455, 'perp', '垂点', { box: [440, 491], t: 463 }), T(502, 'mid', '中点', { box: [491, 542], t: 515 }),
    T(553, 'vert', '顶点'), T(604, 'coord', '坐标'),
  ] },
  { from: 648, to: 1057, pb: 2, items: [
    Gr(650), Cb(655, 57, '不偏移'), S(717), N(720, <Muted>X=</Muted>), N(739, <SpinBox w={58} v="0" />), N(798, <Muted>mm</Muted>),
    N(825, <Muted>Y=</Muted>), N(843, <SpinBox w={58} v="0" />), N(902, <Muted>mm</Muted>), S(928), N(932, <CheckBox />),
    N(952, <Label>旋转</Label>), N(980, <SpinBox w={68} v="0.000" />), N(1051, <Muted>°</Muted>),
  ] },
];

export default function App() {
  return (
    <Page>
      <Global />
      <TitleBar>
        <AppLogo>
          <LogoGlyph viewBox="0 0 12 12"><path d="M6 1v10M2 4c0 4 8 4 8 0" fill="none" stroke="#fff" strokeWidth="1.600" /></LogoGlyph>
        </AppLogo>
        <TitleText>广联达BIM钢筋算量软件 GGJ2013 - [C:\Users\Administrator.PC-20141127NRHM\Desktop\白龙村-2016-08-25-13-27-07(2166版).GGJ12]</TitleText>
        <Ime>
          <ImeChar>中</ImeChar>
          <ImeChar>°,</ImeChar>
          <TaskSvg $s={16} viewBox="0 0 16 16"><rect x="5" y="1" width="6" height="9" rx="3" fill="#1478d0" /><path d="M3 7c0 6 10 6 10 0M8 12v3M5 15h6" fill="none" stroke="#1478d0" strokeWidth="1.300" /></TaskSvg>
          <TaskSvg $s={16} viewBox="0 0 16 16"><rect x="1" y="3" width="14" height="10" rx="1.500" fill="#1478d0" /><path d="M3 6h10M3 8.500h10M5 11h6" stroke="#fff" strokeDasharray="1 1" /></TaskSvg>
          <TaskSvg $s={16} viewBox="0 0 16 16"><circle cx="6" cy="5" r="3" fill="#b8c4d0" /><path d="M1 14c0-6 10-6 10 0z" fill="#b8c4d0" /><rect x="8" y="9" width="7" height="6" fill="#dfe6ec" /></TaskSvg>
          <TaskSvg $s={16} viewBox="0 0 16 16"><path d="M5 1l3 1 3-1 4 3-2 3-1-1v9H4V6L3 7 1 4z" fill="#1478d0" /></TaskSvg>
          <TaskSvg $s={16} viewBox="0 0 16 16"><path d="M14 3l-3 3-1-1 3-3c-3-1-6 1-5 5L1 13l2 2 6-7c4 1 6-2 5-5z" fill="#1478d0" /></TaskSvg>
        </Ime>
        <ImeLogo>S</ImeLogo>
        <Ball>74</Ball>
        <WinControls>
          <WinWrap><WinBtn viewBox="0 0 16 16"><path d="M3 8h10" stroke="#222" /></WinBtn></WinWrap>
          <WinWrap><WinBtn viewBox="0 0 16 16"><path d="M3.500 5.500h7v7h-7zM6 5.500v-2h6.500v7h-2" fill="none" stroke="#222" /></WinBtn></WinWrap>
          <WinWrap><WinBtn viewBox="0 0 16 16"><path d="M3 3l10 10M13 3L3 13" stroke="#222" /></WinBtn></WinWrap>
          <WinWrap />
        </WinControls>
      </TitleBar>
      <MenuBar><Bands base={0} bands={menu} /></MenuBar>
      <Row $h={27}><Bands base={0} bands={row1} /></Row>
      <Row $h={3} />
      <Body>
        <Nav>
          <NavHead>
            <NavHeadText>模块导航栏</NavHeadText>
            <NavPin viewBox="0 0 10 12"><path d="M2 1h6M3 1v5M7 1v5M1 6.500h8M5 7v5" fill="none" stroke="#fff" /></NavPin>
            <NavClose viewBox="0 0 9 9"><path d="M1 1l7 7M8 1L1 8" stroke="#fff" /></NavClose>
          </NavHead>
          <NavTab>工程设置</NavTab>
          <NavTab>绘图输入</NavTab>
          <TreeShell>
            <ExpandBar><Icon n="plus" s={18} /><Icon n="minus" s={16} /></ExpandBar>
            <TreeFrame>
              <Tree />
              <VScroll>
                <ScrollTrack>
                  <Chev viewBox="0 0 9 6"><path d="M1 5l3.500-4L8 5" fill="none" stroke="#555" strokeWidth="1.500" /></Chev>
                </ScrollTrack>
                <ScrollThumb />
                <ScrollTail>
                  <Chev viewBox="0 0 9 6"><path d="M1 1l3.500 4L8 1" fill="none" stroke="#555" strokeWidth="1.500" /></Chev>
                </ScrollTail>
              </VScroll>
            </TreeFrame>
          </TreeShell>
          <NavTab>单构件输入</NavTab>
          <NavTab>报表预览</NavTab>
        </Nav>
        <Work>
          <Row $h={25}><Bands base={170} bands={row2} /></Row>
          <Row $h={25} $mt={2}><Bands base={170} bands={row3} /></Row>
          <Row $h={25} $mt={4}><Bands base={170} bands={row4} /></Row>
          <Canvas />
          <Row $h={28} $mt={2}><Bands base={170} bands={bottom} /></Row>
        </Work>
      </Body>
      <Status>
        <Cell $w={148}><Mono>X=58639 Y=69154</Mono></Cell>
        <Cell $w={78}>层高:<Mono>2.8m</Mono></Cell>
        <Cell $w={98}>底标高:<Mono>13.07m</Mono></Cell>
        <Cell $w={48}><Mono>1(1)</Mono></Cell>
        <Cell $w={0} $grow />
        <Cell $w={71}><Mono>833 FPS</Mono></Cell>
      </Status>
      <Taskbar>
        <StartBtn><WinLogo s={16} c="#fff" /></StartBtn>
        <Search>
          <Cortana />
          <SearchText>在这里输入你要搜索的内容</SearchText>
          <SearchMic><MicGlyph c="#999" /></SearchMic>
        </Search>
        <AppsStart />
        {taskIcons.map(t => t.k === 'gap' ? (
          <TaskGap key={t.k}><TaskSep /><TaskSep /></TaskGap>
        ) : (
          <AppSlot key={t.k} $run={t.run} $active={t.active}>
            <TaskSvg viewBox="0 0 32 32">{t.node}</TaskSvg>
          </AppSlot>
        ))}
        <Tray>
          <Stack $w={64}><span>29%</span><span>CPU使用</span></Stack>
          <TraySlot $w={28}><Chev viewBox="0 0 9 6"><path d="M1 5l3.500-4L8 5" fill="none" stroke="#fff" /></Chev></TraySlot>
          <TraySlot $w={24}><TaskSvg $s={16} viewBox="0 0 16 16"><rect x="1" y="4" width="13" height="9" fill="none" stroke="#fff" /><rect x="3" y="6" width="9" height="5" fill="#fff" /><path d="M4 4V1M9 4V1" stroke="#fff" /></TaskSvg></TraySlot>
          <TraySlot $w={24}><TaskSvg $s={16} viewBox="0 0 16 16"><path d="M1 13C2 7 7 3 14 2M4 14c1-4 4-7 10-8M8 14c1-2 3-3 6-4" fill="none" stroke="#ddd" strokeDasharray="1.500 1" /></TaskSvg></TraySlot>
          <TraySlot $w={23}><TaskSvg $s={16} viewBox="0 0 16 16"><path d="M1 6h3l4-4v12l-4-4H1zM10 5c2 2 2 4 0 6M12 3c3 3 3 7 0 10" fill="none" stroke="#fff" /></TaskSvg></TraySlot>
          <TraySlot $w={24}>中</TraySlot>
          <TraySlot $w={32}><TaskLogoS>S</TaskLogoS></TraySlot>
          <Stack $w={80}><span>15:22</span><span>2017/7/11</span></Stack>
          <TraySlot $w={32}><TaskSvg $s={18} viewBox="0 0 18 18"><path d="M1.500 1.500h15v12H11l-2 3-2-3H1.500z" fill="none" stroke="#fff" strokeWidth="1.300" /></TaskSvg></TraySlot>
        </Tray>
      </Taskbar>
    </Page>
  );
}
